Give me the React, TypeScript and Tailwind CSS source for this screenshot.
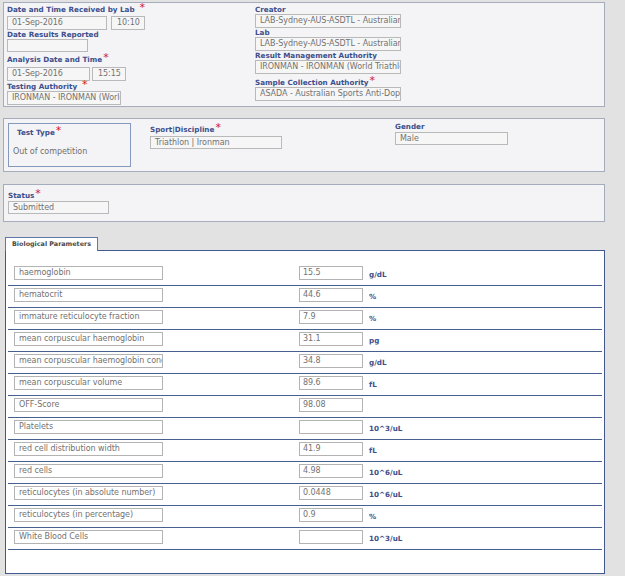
import React from "react";

const F = { fontFamily: '"DejaVu Sans", Verdana, sans-serif' };

function Star({ space = false }: { space?: boolean }) {
  return (
    <span className={`relative inline-block h-0 align-top ${space ? "ml-[4px] w-[7px]" : "w-[7px]"}`}>
      <span className="absolute left-[1px] -top-[3px] text-[11px] font-normal leading-none text-[#d11a1a]">*</span>
    </span>
  );
}

function Label({ text, star, space, cls }: { text: string; star?: boolean; space?: boolean; cls: string }) {
  return (
    <div className={`whitespace-nowrap text-[7.2px] font-bold text-[#3d4f8c] ${cls}`}>
      {text}
      {star && <Star space={space} />}
    </div>
  );
}

function Box({ value, cls }: { value: string; cls: string }) {
  return (
    <div
      className={`overflow-hidden whitespace-nowrap border border-[#b9b9b9] bg-[#f6f6f6] pl-[4px] text-[8px] tracking-[-0.05px] text-[#727272] ${cls}`}
    >
      {value}
    </div>
  );
}

const rows: [string, string, string][] = [
  ["haemoglobin", "15.5", "g/dL"],
  ["hematocrit", "44.6", "%"],
  ["immature reticulocyte fraction", "7.9", "%"],
  ["mean corpuscular haemoglobin", "31.1", "pg"],
  ["mean corpuscular haemoglobin concentration", "34.8", "g/dL"],
  ["mean corpuscular volume", "89.6", "fL"],
  ["OFF-Score", "98.08", ""],
  ["Platelets", "", "10^3/uL"],
  ["red cell distribution width", "41.9", "fL"],
  ["red cells", "4.98", "10^6/uL"],
  ["reticulocytes (in absolute number)", "0.0448", "10^6/uL"],
  ["reticulocytes (in percentage)", "0.9", "%"],
  ["White Blood Cells", "", "10^3/uL"],
];

export default function App() {
  return (
    <div className="h-[576px] w-[625px] overflow-hidden bg-[#e2e2e2]" style={F}>
      {/* Panel 1 */}
      <div className="ml-[3px] mt-[2px] flex h-[105px] w-[602px] border border-[#a5adbd] bg-[#f4f4f6]">
        <div className="flex w-[251px] flex-col pl-[3px] pt-[2px]">
          <Label text="Date and Time Received by Lab" star space cls="h-[10px] leading-[10px]" />
          <div className="mt-[1px] flex gap-[4px]">
            <Box value="01-Sep-2016" cls="h-[14px] w-[100px] leading-[12px]" />
            <Box value="10:10" cls="h-[14px] w-[34px] pl-[5px] leading-[12px]" />
          </div>
          <Label text="Date Results Reported" cls="h-[9px] leading-[9px]" />
          <Box value="" cls="h-[13px] w-[81px]" />
          <Label text="Analysis Date and Time" star cls="mt-[3px] h-[10px] leading-[10px]" />
          <div className="mt-[2px] flex gap-[2px]">
            <Box value="01-Sep-2016" cls="h-[14px] w-[83px] leading-[12px]" />
            <Box value="15:15" cls="h-[14px] w-[34px] pl-[5px] leading-[12px]" />
          </div>
          <Label text="Testing Authority" star space cls="mt-[1px] h-[9px] leading-[9px]" />
          <Box value="IRONMAN - IRONMAN (World Triathlon Corporation)" cls="h-[14px] w-[114px] leading-[12px]" />
        </div>
        <div className="flex flex-col pt-[2px]">
          <Label text="Creator" cls="h-[9px] leading-[9px]" />
          <Box value="LAB-Sydney-AUS-ASDTL - Australian Sports Drug Testing Laboratory" cls="h-[14px] w-[146px] leading-[12px]" />
          <Label text="Lab" cls="h-[9px] leading-[9px]" />
          <Box value="LAB-Sydney-AUS-ASDTL - Australian Sports Drug Testing Laboratory" cls="h-[14px] w-[146px] leading-[12px]" />
          <Label text="Result Management Authority" cls="h-[9px] leading-[9px]" />
          <Box value="IRONMAN - IRONMAN (World Triathlon Corporation)" cls="h-[14px] w-[146px] leading-[12px]" />
          <Label text="Sample Collection Authority" star cls="mt-[4px] h-[9px] leading-[9px]" />
          <Box value="ASADA - Australian Sports Anti-Doping Authority" cls="h-[14px] w-[146px] leading-[12px]" />
        </div>
      </div>

      {/* Panel 2 */}
      <div className="ml-[3px] mt-[11px] flex h-[54px] w-[602px] items-start border border-[#a5adbd] bg-[#f4f4f6]">
        <div className="ml-[4px] mt-[4px] flex h-[44px] w-[123px] flex-col border border-[#8599bd]">
          <Label text="Test Type" star cls="ml-[8px] mt-[4px] h-[10px] leading-[10px]" />
          <div className="ml-[4px] mt-[9px] h-[10px] whitespace-nowrap text-[8px] leading-[10px] tracking-[-0.05px] text-[#6f6f6f]">
            Out of competition
          </div>
        </div>
        <div className="ml-[19px] flex flex-col">
          <Label text="Sport|Discipline" star cls="mt-[6px] h-[10px] leading-[10px]" />
          <Box value="Triathlon | Ironman" cls="mt-[1px] h-[13px] w-[132px] leading-[11px]" />
        </div>
        <div className="ml-[113px] flex flex-col">
          <Label text="Gender" cls="mt-[3px] h-[10px] leading-[10px]" />
          <Box value="Male" cls="h-[13px] w-[113px] leading-[11px]" />
        </div>
      </div>

      {/* Panel 3 */}
      <div className="ml-[3px] mt-[12px] flex h-[38px] w-[602px] flex-col border border-[#a5adbd] bg-[#f4f4f6] pl-[4px]">
        <Label text="Status" star cls="mt-[6px] h-[10px] leading-[10px]" />
        <Box value="Submitted" cls="h-[13px] w-[101px] leading-[11px]" />
      </div>

      {/* Tab */}
      <div className="relative z-10 -mb-px ml-[5px] mt-[15px] h-[14px] w-[93px] whitespace-nowrap border border-b-0 border-[#5f78a8] bg-white pl-[6px] text-[6.4px] font-bold leading-[13px] text-[#4a4a4a]">
        Biological Parameters
      </div>
      <div className="ml-[5px] h-[324px] w-[600px] border border-[#41598c] bg-white pt-[13px]">
        <div className="ml-[2px] w-[594px]">
          {rows.map(([name, val, unit]) => (
            <div key={name} className="flex h-[22px] items-start border-b border-[#46608f] pl-[6px] pt-[2px]">
              <div className="h-[14px] w-[149px] overflow-hidden whitespace-nowrap border border-[#b3b3b3] bg-white pl-[4px] text-[8px] leading-[12px] tracking-[-0.05px] text-[#727272]">
                {name}
              </div>
              <div className="ml-[136px] h-[14px] w-[64px] overflow-hidden whitespace-nowrap border border-[#b3b3b3] bg-white pl-[3px] text-[8px] leading-[12px] tracking-[-0.05px] text-[#727272]">
                {val}
              </div>
              <div className="ml-[6px] mt-[3px] text-[7.2px] font-bold leading-[12px] text-[#3d4f8c]">{unit}</div>
            </div>
          ))}
        </div>
      </div>
    </div>
  );
}
